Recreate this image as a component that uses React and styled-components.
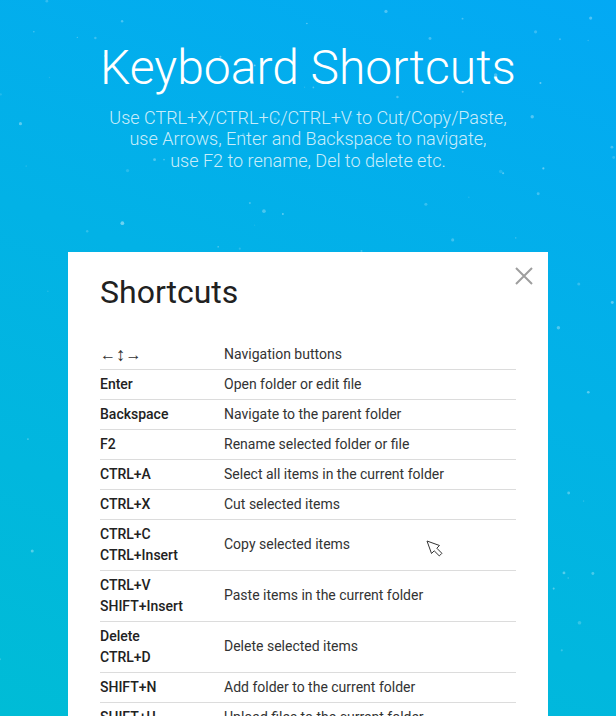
import React from 'react';
import styled, { createGlobalStyle } from 'styled-components';

const GlobalStyle = createGlobalStyle`
  html, body {
    margin: 0;
    padding: 0;
  }
  body {
    font-family: Roboto, "Noto Sans", "Liberation Sans", sans-serif;
    overflow: hidden;
  }
`;

const Page = styled.div`
  position: relative;
  height: 716px;
  overflow: hidden;
  background: linear-gradient(20deg, #00bcd6 0%, #02b2e6 55%, #03a9f4 100%);
`;

const Stars = styled.svg`
  position: absolute;
  top: 0;
  left: 0;
  width: 100%;
  height: 100%;
  pointer-events: none;
`;

const Content = styled.div`
  position: relative;
  display: flex;
  flex-direction: column;
  align-items: center;
  padding-top: 42px;
`;

const Title = styled.h1`
  margin: 0;
  font-size: 48px;
  line-height: 1.1;
  font-weight: 300;
  color: #fff;
  text-align: center;
`;

const Lead = styled.p`
  margin: 12px 0 0;
  font-size: 18px;
  line-height: 21.5px;
  font-weight: 300;
  color: rgba(255, 255, 255, 0.8);
  text-align: center;
`;

const Card = styled.div`
  position: relative;
  width: 480px;
  box-sizing: border-box;
  margin-top: 81px;
  padding: 21px 32px 32px;
  background: #fff;
`;

const Close = styled.button`
  position: absolute;
  top: 14px;
  right: 14px;
  width: 20px;
  height: 20px;
  padding: 0;
  border: 0;
  background: none;
  display: flex;
  align-items: center;
  justify-content: center;
  cursor: pointer;
`;

const CardTitle = styled.h2`
  margin: 0 0 28px;
  font-size: 32px;
  line-height: 1.2;
  font-weight: 400;
  color: #212121;
`;

const Table = styled.div`
  display: flex;
  flex-direction: column;
`;

const Row = styled.div`
  display: grid;
  grid-template-columns: 124px 1fr;
  align-items: center;
  padding: 4px 0;
  border-bottom: 1px solid #dcdcdc;
  font-size: 14px;
  line-height: 21px;
`;

const Keys = styled.div`
  display: flex;
  flex-direction: column;
  font-weight: 500;
  color: #222;
`;

const Arrows = styled.span`
  display: flex;
  align-items: center;
  height: 21px;
  font-weight: 400;
  font-size: 16px;
  color: #333;
`;

const Updown = styled.span`
  font-size: 19px;
  line-height: 1;
`;

const Desc = styled.div`
  color: #333;
`;

const Pointer = styled.svg`
  position: absolute;
  left: 426px;
  top: 540px;
  pointer-events: none;
`;

const shortcuts = [
  { keys: ['arrows'], desc: 'Navigation buttons' },
  { keys: ['Enter'], desc: 'Open folder or edit file' },
  { keys: ['Backspace'], desc: 'Navigate to the parent folder' },
  { keys: ['F2'], desc: 'Rename selected folder or file' },
  { keys: ['CTRL+A'], desc: 'Select all items in the current folder' },
  { keys: ['CTRL+X'], desc: 'Cut selected items' },
  { keys: ['CTRL+C', 'CTRL+Insert'], desc: 'Copy selected items' },
  { keys: ['CTRL+V', 'SHIFT+Insert'], desc: 'Paste items in the current folder' },
  { keys: ['Delete', 'CTRL+D'], desc: 'Delete selected items' },
  { keys: ['SHIFT+N'], desc: 'Add folder to the current folder' },
  { keys: ['SHIFT+U'], desc: 'Upload files to the current folder' },
  { keys: ['CTRL+F'], desc: 'Search in the current folder' },
];

// seeded dots for the starry background
const makeStars = () => {
  let s = 7;
  const rnd = () => {
    s = (s * 16807) % 2147483647;
    return s / 2147483647;
  };
  const list = [];
  for (let i = 0; i < 130; i++) {
    list.push({
      x: rnd() * 616,
      y: rnd() * 716,
      r: 0.6 + rnd() * 1.3,
      o: 0.12 + rnd() * 0.3,
    });
  }
  return list;
};
const stars = makeStars();

const App = () => {
  return (
    <Page>
      <GlobalStyle />
      <Stars viewBox="0 0 616 716">
        {stars.map((d, i) => (
          <circle key={i} cx={d.x} cy={d.y} r={d.r} fill="#fff" opacity={d.o} />
        ))}
      </Stars>
      <Content>
        <Title>Keyboard Shortcuts</Title>
        <Lead>
          Use CTRL+X/CTRL+C/CTRL+V to Cut/Copy/Paste,<br />
          use Arrows, Enter and Backspace to navigate,<br />
          use F2 to rename, Del to delete etc.
        </Lead>
        <Card>
          <Close aria-label="Close">
            <svg width="18" height="18" viewBox="0 0 18 18">
              <path d="M1 1L17 17M17 1L1 17" stroke="#9e9e9e" strokeWidth="2" fill="none" />
            </svg>
          </Close>
          <CardTitle>Shortcuts</CardTitle>
          <Table>
            {shortcuts.map((s) => (
              <Row key={s.desc}>
                <Keys>
                  {s.keys.map((k) =>
                    k === 'arrows' ? (
                      <Arrows key={k}>
                        ←<Updown>↕</Updown>→
                      </Arrows>
                    ) : (
                      <span key={k}>{k}</span>
                    )
                  )}
                </Keys>
                <Desc>{s.desc}</Desc>
              </Row>
            ))}
          </Table>
        </Card>
      </Content>
      <Pointer width="18" height="18" viewBox="0 0 18 18">
        <path
          d="M1 1L5.5 13.5L8.2 10.8L13.3 15.9L15.9 13.3L10.8 8.2L13.5 5.5Z"
          fill="#fff"
          stroke="#333"
          strokeWidth="1"
          strokeLinejoin="round"
        />
      </Pointer>
    </Page>
  );
};

export default App;
